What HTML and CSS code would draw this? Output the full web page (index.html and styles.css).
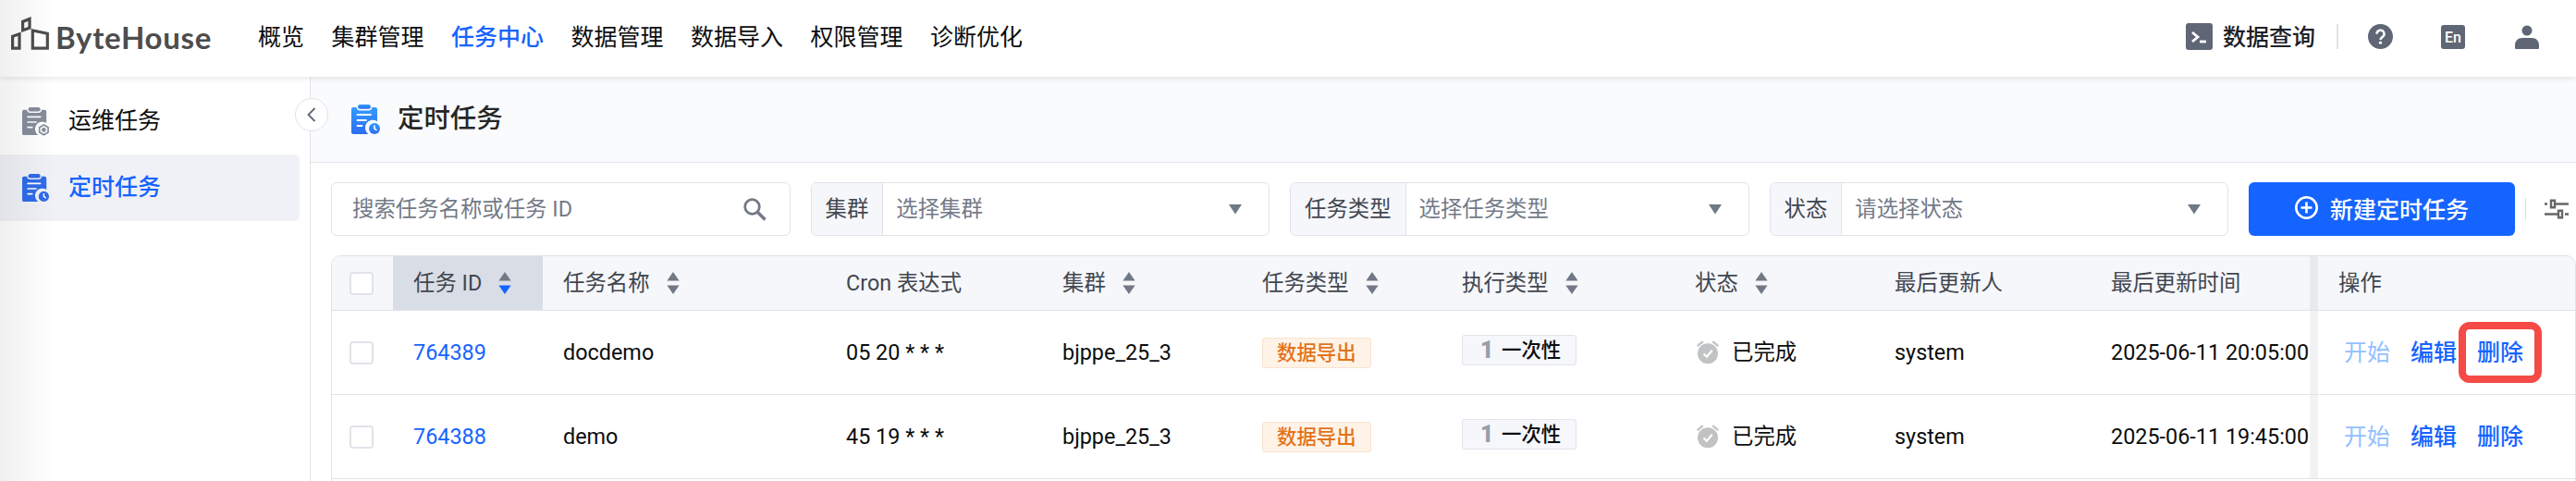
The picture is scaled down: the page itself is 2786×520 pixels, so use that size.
FILE: index.html
```
<!DOCTYPE html>
<html lang="zh-CN">
<head>
  <meta charset="UTF-8">
  <meta name="viewport" content="width=device-width, initial-scale=1.0">
  <title>ByteHouse - 定时任务</title>
  <link rel="stylesheet" href="styles.css">
</head>
<body>
  <!-- Icons -->
  <svg class="sprite" aria-hidden="true">
    <defs>
      <linearGradient id="blue_fill" x1="0" y1="0" x2="0" y2="1">
        <stop offset="0" stop-color="#339cff"/>
        <stop offset="1" stop-color="#2d6cf0"/>
      </linearGradient>
    </defs>
    <symbol id="icon_sort" viewBox="0 0 14 24">
      <path d="M7 0L13.6 9.5H.4z" class="sort-up"/>
      <path d="M7 24L13.6 14.5H.4z" class="sort-down"/>
    </symbol>
    <symbol id="icon_arrow" viewBox="0 0 16 12">
      <path d="M1 1h14L8 11.500z" fill="currentColor"/>
    </symbol>
    <symbol id="icon_clipboard" viewBox="0 0 30 32">
      <path d="M2 3h3.500a4 4 0 0 0 4 3.400h9A4 4 0 0 0 22.500 3H26a2 2 0 0 1 2 2v13.200a8 8 0 0 0-9.500 13.800H2a2 2 0 0 1-2-2V5a2 2 0 0 1 2-2z"/>
      <rect x="7" y="0" width="14" height="4.800" rx="2.400"/>
      <path d="M6.500 11h14.500M6.500 17h9.500M6.500 23h5" stroke="#fff" stroke-width="1.800" stroke-linecap="round"/>
    </symbol>
    <symbol id="icon_alarm" viewBox="0 0 24 26">
      <path d="M1.500 5.500L6 1.800M22.500 5.500L18 1.800" stroke="#c5c6c8" stroke-width="2.400" stroke-linecap="round"/>
      <circle cx="12" cy="14.200" r="11" fill="#c0c2c4"/>
      <path d="M7.500 14.500l3.300 3.200 6-7" fill="none" stroke="#fff" stroke-width="2.200"/>
    </symbol>
  </svg>

  <header class="header">
    <a class="logo">
      <svg class="logo-mark" width="43" height="38" viewBox="0 0 43 38" fill="none" stroke="#4d4d4d" stroke-width="3.200">
        <path d="M2.600 35.100V22.300l7.400-2.500v15.300zM13.600 15.800V6.400l7.400-3v9.800zM24.300 35.100V16l16 3.300v15.800z"/>
      </svg>
      <span class="logo-text">ByteHouse</span>
    </a>
    <nav class="nav">
      <a>概览</a>
      <a>集群管理</a>
      <a class="current">任务中心</a>
      <a>数据管理</a>
      <a>数据导入</a>
      <a>权限管理</a>
      <a>诊断优化</a>
    </nav>
    <div class="tools">
      <svg width="29" height="29" viewBox="0 0 29 29"><rect width="29" height="29" rx="3" fill="#5f6675"/><path d="M7 10l6 5-6 5" fill="none" stroke="#fff" stroke-width="2.800"/><path d="M15 20h7" stroke="#fff" stroke-width="2.800"/></svg>
      <span class="query">数据查询</span>
      <i class="tools-line"></i>
      <svg class="help" width="27" height="27" viewBox="0 0 27 27"><circle cx="13.500" cy="13.500" r="13.500" fill="#5f6675"/><path d="M9.500 10.700a4 4 0 1 1 6 3.400c-1.400.8-2 1.500-2 3" fill="none" stroke="#fff" stroke-width="2.400"/><circle cx="13.500" cy="20.200" r="1.600" fill="#fff"/></svg>
      <span class="lang">En</span>
      <svg class="user" width="26" height="26" viewBox="0 0 26 26" fill="#5f6675"><circle cx="13" cy="6" r="5.500"/><path d="M0 25v-3c0-4.500 3-8 8-8h10c5 0 8 3.500 8 8v3a1 1 0 0 1-1 1H1a1 1 0 0 1-1-1z"/></svg>
    </div>
  </header>

  <div class="layout">
    <aside class="sidebar">
      <a class="menu-item">
        <svg class="clip" width="29" height="31" viewBox="0 0 31 33" fill="#868d9c"><use href="#icon_clipboard" width="30" height="32"/><path d="M25 20.300l5 2.900v5.600l-5 2.900-5-2.900v-5.600z" fill="none" stroke="#868d9c" stroke-width="1.800"/><circle cx="25" cy="26" r="2.500"/></svg>
        <span>运维任务</span>
      </a>
      <a class="menu-item selected">
        <svg class="clip" width="29" height="31" viewBox="0 0 31 33" fill="#2f6bea"><use href="#icon_clipboard" width="30" height="32"/><circle cx="25" cy="26" r="6"/><path d="M25 22.500V26l2.500 2" fill="none" stroke="#fff" stroke-width="1.600"/></svg>
        <span>定时任务</span>
      </a>
      <button class="collapse">
        <svg width="10" height="16" viewBox="0 0 10 16"><path d="M8.500 1L1.500 8l7 7" fill="none" stroke="#5f6675" stroke-width="1.800"/></svg>
      </button>
    </aside>

    <main class="main">
      <div class="page-title">
        <svg class="clip" width="31" height="33" viewBox="0 0 31 33" fill="url(#blue_fill)"><use href="#icon_clipboard" width="30" height="32"/><circle cx="25" cy="26" r="6"/><path d="M25 22.500V26l2.500 2" fill="none" stroke="#fff" stroke-width="1.600"/></svg>
        <h1>定时任务</h1>
      </div>

      <div class="filters">
        <div class="field search">
          <span class="placeholder">搜索任务名称或任务 ID</span>
          <svg width="25" height="25" viewBox="0 0 25 25" fill="none" stroke="#717886"><circle cx="9.500" cy="9.500" r="7.800" stroke-width="2.800"/><path d="M15.500 15.500L23.500 23.500" stroke-width="3.400"/></svg>
        </div>
        <div class="field">
          <span class="label">集群</span>
          <span class="placeholder">选择集群</span>
          <svg class="arrow"><use href="#icon_arrow"/></svg>
        </div>
        <div class="field">
          <span class="label">任务类型</span>
          <span class="placeholder">选择任务类型</span>
          <svg class="arrow"><use href="#icon_arrow"/></svg>
        </div>
        <div class="field">
          <span class="label">状态</span>
          <span class="placeholder">请选择状态</span>
          <svg class="arrow"><use href="#icon_arrow"/></svg>
        </div>
        <button class="create">
          <svg width="25" height="25" viewBox="0 0 25 25" fill="none" stroke="#fff" stroke-width="2.600"><circle cx="12.500" cy="12.500" r="11.200"/><path d="M12.500 6.500v12M6.500 12.500h12"/></svg>
          <span>新建定时任务</span>
        </button>
        <i class="filters-line"></i>
        <svg class="settings" width="26" height="22" viewBox="0 0 26 22" fill="none" stroke="#666" stroke-width="2.400"><path d="M0 5.500h3M12 5.500h14M0 16.500h14M22 16.500h4"/><path d="M7 1.700h4v7.600H7zM15 12.700h4v7.600h-4z"/></svg>
      </div>

      <div class="table">
        <div class="row head">
          <div class="cell check"><i class="checkbox"></i></div>
          <div class="cell sorted">任务 ID<svg class="sort desc"><use href="#icon_sort"/></svg></div>
          <div class="cell">任务名称<svg class="sort"><use href="#icon_sort"/></svg></div>
          <div class="cell">Cron 表达式</div>
          <div class="cell">集群<svg class="sort"><use href="#icon_sort"/></svg></div>
          <div class="cell">任务类型<svg class="sort"><use href="#icon_sort"/></svg></div>
          <div class="cell">执行类型<svg class="sort"><use href="#icon_sort"/></svg></div>
          <div class="cell">状态<svg class="sort"><use href="#icon_sort"/></svg></div>
          <div class="cell">最后更新人</div>
          <div class="cell time">最后更新时间</div>
          <div class="cell">操作</div>
        </div>
        <div class="row">
          <div class="cell check"><i class="checkbox"></i></div>
          <div class="cell link">764389</div>
          <div class="cell">docdemo</div>
          <div class="cell">05 20 * * *</div>
          <div class="cell">bjppe_25_3</div>
          <div class="cell"><span class="tag orange">数据导出</span></div>
          <div class="cell"><span class="tag once"><b>1</b>一次性</span></div>
          <div class="cell"><svg class="alarm"><use href="#icon_alarm"/></svg>已完成</div>
          <div class="cell">system</div>
          <div class="cell time">2025-06-11 20:05:00</div>
          <div class="cell actions"><a class="disabled">开始</a><a>编辑</a><a class="marked">删除</a></div>
        </div>
        <div class="row">
          <div class="cell check"><i class="checkbox"></i></div>
          <div class="cell link">764388</div>
          <div class="cell">demo</div>
          <div class="cell">45 19 * * *</div>
          <div class="cell">bjppe_25_3</div>
          <div class="cell"><span class="tag orange">数据导出</span></div>
          <div class="cell"><span class="tag once"><b>1</b>一次性</span></div>
          <div class="cell"><svg class="alarm"><use href="#icon_alarm"/></svg>已完成</div>
          <div class="cell">system</div>
          <div class="cell time">2025-06-11 19:45:00</div>
          <div class="cell actions"><a class="disabled">开始</a><a>编辑</a><a>删除</a></div>
        </div>
      </div>
    </main>
  </div>
</body>
</html>
```
FILE: styles.css
```
*,
*::after {
  box-sizing: border-box;
}
body {
  margin: 0;
  height: 520px;
  overflow: hidden;
  position: relative;
  background: #fff;
  color: #0c0d0e;
  font-family: Roboto, "Noto Sans CJK SC", sans-serif;
  font-size: 23.4px;
  line-height: 34px;
}
/* soft shade along the left edge of the window */
body::after {
  content: "";
  position: absolute;
  z-index: 2;
  top: 0;
  left: 0;
  width: 60px;
  height: 100%;
  background: linear-gradient(to right, rgba(0, 0, 0, 0.06), rgba(0, 0, 0, 0));
  pointer-events: none;
}
.sprite {
  position: absolute;
  width: 0;
  height: 0;
}
svg {
  flex: none;
}

/* Header */
.header {
  position: relative;
  z-index: 1;
  display: flex;
  align-items: center;
  height: 83px;
  padding: 0 40px 4px 11px;
  background: #fff;
  box-shadow: 0 2px 6px rgba(0, 0, 0, 0.09);
}
.logo {
  display: flex;
  align-items: flex-start;
  width: 268px;
  margin-bottom: 4px;
}
.logo-text {
  margin-left: 6px;
  padding-top: 4px;
  color: #4d4d4d;
  font-family: Lato, sans-serif;
  font-size: 33px;
  font-weight: 700;
  letter-spacing: 0.7px;
  line-height: 38px;
}
.nav {
  display: flex;
  gap: 29.5px;
  padding-top: 2px;
  font-size: 25px;
}
.nav .current {
  color: #1664ff;
  font-weight: 500;
}
.tools {
  display: flex;
  align-items: center;
  margin-left: auto;
}
.query {
  margin-left: 11px;
  padding-top: 2px;
  font-size: 25px;
  font-weight: 500;
  color: #1d2129;
}
.tools-line {
  width: 2px;
  height: 27px;
  margin: 0 32px 0 23px;
  background: #e1e3e9;
}
.lang {
  width: 26px;
  height: 26px;
  margin: 0 54px 0 52px;
  border-radius: 3px;
  background: #5f6675;
  color: #fff;
  font-size: 16px;
  font-weight: 500;
  line-height: 27px;
  text-align: center;
}

/* Sidebar */
.layout {
  display: flex;
  height: 437px;
}
.sidebar {
  position: relative;
  width: 337px;
  padding-top: 12px;
  border-right: 1px solid #e1e3e9;
}
.menu-item {
  display: flex;
  align-items: center;
  width: 324px;
  height: 72px;
  padding-left: 24px;
  font-size: 25px;
}
.menu-item span {
  margin-left: 21px;
}
.selected {
  border-radius: 0 6px 6px 0;
  background: #f0f1f6;
  color: #1664ff;
  font-weight: 500;
}
.collapse {
  position: absolute;
  z-index: 1;
  top: 23px;
  right: -20px;
  display: flex;
  align-items: center;
  justify-content: center;
  width: 36px;
  height: 36px;
  padding: 0;
  border: 1px solid #e1e3e9;
  border-radius: 50%;
  background: #fff;
}

/* Page title */
.main {
  flex: 1;
}
.page-title {
  display: flex;
  align-items: center;
  height: 93px;
  padding-left: 44px;
  border-bottom: 1px solid #e1e3e9;
  background: #fafbfd;
}
.page-title h1 {
  margin: 0 0 1px 19px;
  color: #262626;
  font-size: 28.4px;
  font-weight: 500;
}

/* Filters */
.filters {
  display: flex;
  align-items: center;
  gap: 22px;
  padding: 21px 8px 21px 22px;
}
.field {
  display: flex;
  align-items: center;
  width: 496.5px;
  height: 58px;
  border: 1px solid #e1e3e9;
  border-radius: 6px;
  overflow: hidden;
}
.search {
  padding: 0 25px 0 22px;
  justify-content: space-between;
}
.placeholder {
  color: #737a87;
}
.label {
  height: 56px;
  padding: 0 15px;
  margin-right: 14px;
  border-right: 1px solid #e1e3e9;
  background: #f6f7fa;
  color: #41464f;
  line-height: 56px;
}
.arrow {
  width: 16px;
  height: 12px;
  margin: 0 28px 0 auto;
  color: #717886;
}
.create {
  display: flex;
  align-items: center;
  justify-content: center;
  gap: 13px;
  width: 288px;
  height: 58px;
  padding: 0 0 3px;
  border: none;
  border-radius: 6px;
  background: #1664ff;
  color: #fff;
  font-family: inherit;
  font-size: 25px;
  font-weight: 500;
}
.filters-line {
  width: 1px;
  height: 24px;
  margin: 0 -2px 0 -11px;
  background: #dcdfe6;
}

/* Table */
.table {
  height: 244px;
  margin-left: 22px;
  border: 1px solid #e1e3e9;
  border-bottom: none;
  border-radius: 10px 10px 0 0;
  overflow: hidden;
}
.row {
  display: grid;
  grid-template-columns: 66px 162px 306px 234px 216px 216px 252px 216px 234px 246px 1fr;
  height: 91px;
  border-bottom: 1px solid #e1e3e9;
}
.head {
  height: 59px;
  background: #f6f7fa;
  color: #41464f;
}
.cell {
  display: flex;
  align-items: center;
  padding-left: 22px;
  white-space: nowrap;
}
.check {
  padding-left: 19px;
}
.checkbox {
  width: 26px;
  height: 25px;
  border: 2px solid #e1e3e9;
  border-radius: 4px;
  background: #fff;
}
.sorted {
  background: #d9dde5;
}
.sort {
  width: 14px;
  height: 24px;
  margin-left: 18px;
  fill: #717886;
}
.desc {
  --down: #1664ff;
}
.sort-down {
  fill: var(--down, #717886);
}
.link {
  color: #1664ff;
}
.time {
  border-right: 9px solid rgba(0, 0, 0, 0.05);
}
.tag {
  height: 33px;
  padding: 0 15px;
  border: 1px solid #e1e3e9;
  border-radius: 3px;
  font-size: 21.4px;
  font-weight: 500;
  line-height: 31px;
}
.orange {
  border-color: #fae3cf;
  background: #fff3e8;
  color: #e37318;
}
.once {
  display: flex;
  align-items: center;
  margin-bottom: 5px;
  padding: 0 16px 0 19px;
  background: #f6f7fa;
}
.once b {
  width: 12px;
  margin-right: 11px;
  color: #969fa9;
  font-size: 25px;
  font-weight: 900;
}
.alarm {
  width: 24px;
  height: 26px;
  margin: 0 14px 0 2px;
}
.actions {
  gap: 22px;
  padding: 1px 0 0 28px;
  color: #1664ff;
  font-size: 25px;
  font-weight: 500;
}
.disabled {
  color: #94bfff;
  font-weight: 400;
}
.marked {
  position: relative;
}
/* highlight frame around the delete link */
.marked::after {
  content: "";
  position: absolute;
  top: -17px;
  left: -20px;
  width: 90px;
  height: 66px;
  border: 8px solid #f54a45;
  border-radius: 12px;
}
```
